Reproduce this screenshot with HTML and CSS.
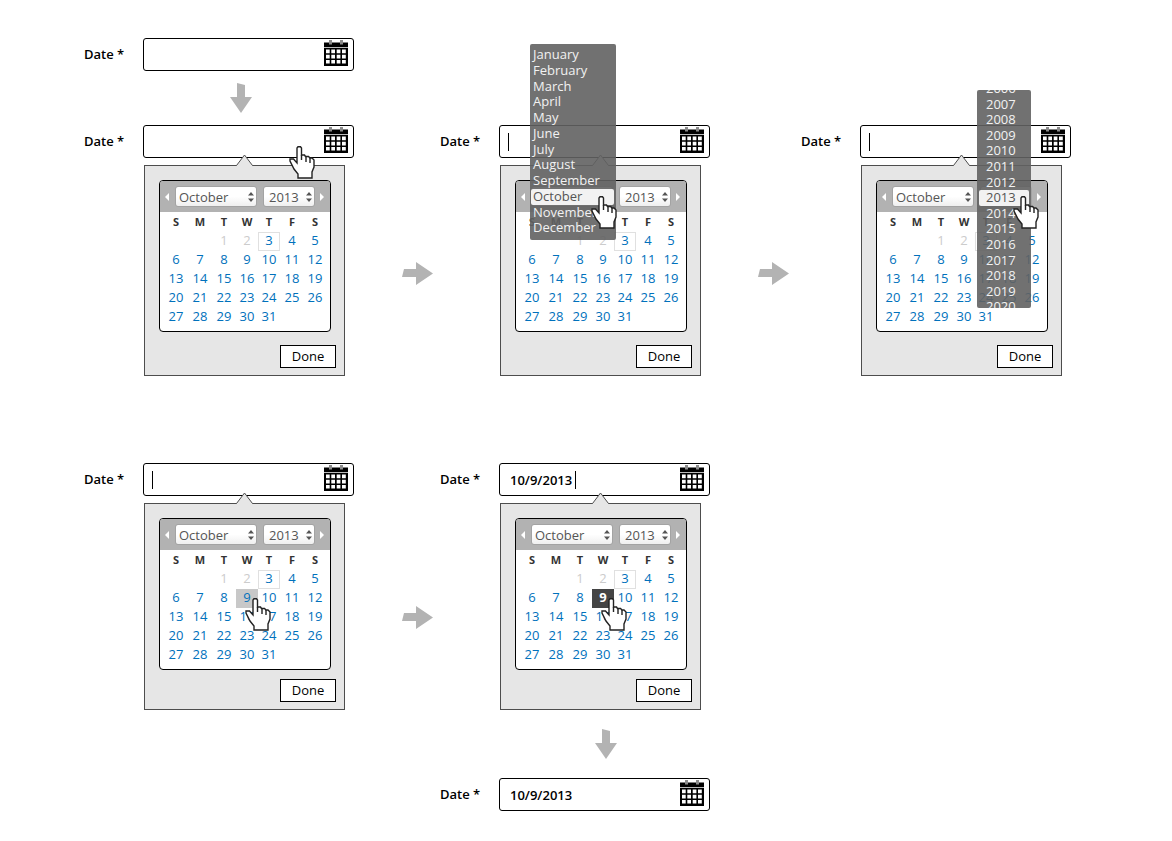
FILE: index.html
```html
<!DOCTYPE html>
<html lang="en">
<head>
<meta charset="utf-8">
<meta name="viewport" content="width=device-width, initial-scale=1">
<title>Date picker flow</title>
<link rel="stylesheet" href="styles.css">
</head>
<body>
<svg class="sprite" aria-hidden="true">
  <symbol id="calendar" viewBox="0 0 24 26">
    <path d="M0 2.500h24V7H0z"/>
    <path d="M5 0h3v4.500H5zM16 0h3v4.500h-3z" fill="#8c8c8c"/>
    <path d="M0 7h24v1H0z" fill="#bbb"/>
    <path d="M0 8h24v18H0z"/>
    <path d="M2 9.500h3.700v3.800H2zM7.300 9.500H11v3.800H7.300zM12.700 9.500h3.700v3.800h-3.700zM18 9.500h3.800v3.800H18zM2 14.800h3.700v3.800H2zM7.300 14.800H11v3.800H7.300zM12.700 14.800h3.700v3.800h-3.700zM18 14.800h3.800v3.800H18zM2 20.100h3.700v3.500H2zM7.300 20.100H11v3.500H7.300zM12.700 20.100h3.700v3.500h-3.700zM18 20.100h3.800v3.500H18z" fill="#fff"/>
  </symbol>
  <symbol id="arrow-right" viewBox="0 0 31 23">
    <path d="M2 7h12V0l17 11.500L14 23v-8H0z" fill="#b3b3b3"/>
  </symbol>
  <symbol id="arrow-down" viewBox="0 0 22 30">
    <path d="M7 0l8 2v12h7L11 30 0 14h7z" fill="#b3b3b3"/>
  </symbol>
  <symbol id="hand" viewBox="0 0 26 33">
    <path d="M8 17V2l1-1.300h2.500l1 1.300v7h3l1 1.500h3l1.500 1.500h2L25 14v7l-2 5v6H9v-4l-4-5-4-8v-2h3.500z" fill="#fff" stroke="#222" stroke-width="1.400"/>
    <path d="M12.500 9v5M17 10.500V16M21 12v5" fill="none" stroke="#222" stroke-width="1.400"/>
  </symbol>
  <symbol id="tip" viewBox="0 0 18 12">
    <path d="M0 12L8.500 1 17 12z" fill="#e6e6e6"/>
    <path d="M0 11.500h.5L8.500 1l8 10.500h.5" fill="none" stroke="#4d4d4d"/>
  </symbol>
  <symbol id="updown" viewBox="0 0 6 10">
    <path d="M3 0l3 3.500H0zM3 10L0 6.500h6z" fill="#555"/>
  </symbol>
  <symbol id="prev" viewBox="0 0 4 8"><path d="M4 0v8L0 4z" fill="#fff"/></symbol>
  <symbol id="next" viewBox="0 0 4 8"><path d="M0 0v8l4-4z" fill="#fff"/></symbol>
</svg>

<main class="flow">
  <section class="step step--start">
    <div class="field">
      <label class="field__label" for="date-1">Date *</label>
      <div class="field__box">
        <input class="field__input" id="date-1" type="text">
        <svg class="field__icon"><use href="#calendar"/></svg>
      </div>
    </div>
  </section>

  <svg class="arrow-down arrow-down--start" aria-hidden="true"><use href="#arrow-down"/></svg>

  <section class="step step--open">
    <div class="field">
      <label class="field__label" for="date-2">Date *</label>
      <div class="field__box">
        <input class="field__input" id="date-2" type="text">
        <svg class="field__icon"><use href="#calendar"/></svg>
      </div>
    </div>
    <div class="picker" data-picker>
      <svg class="hand hand--field"><use href="#hand"/></svg>
    </div>
  </section>

  <svg class="arrow-right arrow-right--one" aria-hidden="true"><use href="#arrow-right"/></svg>

  <section class="step step--month">
    <div class="field">
      <label class="field__label" for="date-3">Date *</label>
      <div class="field__box">
        <input class="field__input" id="date-3" type="text">
        <span class="caret"></span>
        <svg class="field__icon"><use href="#calendar"/></svg>
      </div>
    </div>
    <div class="picker" data-picker>
      <div class="menu menu--month">
        <ul class="menu__list" role="listbox" aria-label="Month">
          <li class="menu__item" role="option">January</li>
          <li class="menu__item" role="option">February</li>
          <li class="menu__item" role="option">March</li>
          <li class="menu__item" role="option">April</li>
          <li class="menu__item" role="option">May</li>
          <li class="menu__item" role="option">June</li>
          <li class="menu__item" role="option">July</li>
          <li class="menu__item" role="option">August</li>
          <li class="menu__item" role="option">September</li>
          <li class="menu__item menu__item--on" role="option" aria-selected="true">October</li>
          <li class="menu__item" role="option">November</li>
          <li class="menu__item" role="option">December</li>
        </ul>
      </div>
      <svg class="hand hand--month"><use href="#hand"/></svg>
    </div>
  </section>

  <svg class="arrow-right arrow-right--two" aria-hidden="true"><use href="#arrow-right"/></svg>

  <section class="step step--year">
    <div class="field">
      <label class="field__label" for="date-4">Date *</label>
      <div class="field__box">
        <input class="field__input" id="date-4" type="text">
        <span class="caret"></span>
        <svg class="field__icon"><use href="#calendar"/></svg>
      </div>
    </div>
    <div class="picker" data-picker>
      <div class="menu menu--year">
        <ul class="menu__list" role="listbox" aria-label="Year">
          <li class="menu__item" role="option">2006</li>
          <li class="menu__item" role="option">2007</li>
          <li class="menu__item" role="option">2008</li>
          <li class="menu__item" role="option">2009</li>
          <li class="menu__item" role="option">2010</li>
          <li class="menu__item" role="option">2011</li>
          <li class="menu__item" role="option">2012</li>
          <li class="menu__item menu__item--on" role="option" aria-selected="true">2013</li>
          <li class="menu__item" role="option">2014</li>
          <li class="menu__item" role="option">2015</li>
          <li class="menu__item" role="option">2016</li>
          <li class="menu__item" role="option">2017</li>
          <li class="menu__item" role="option">2018</li>
          <li class="menu__item" role="option">2019</li>
          <li class="menu__item" role="option">2020</li>
        </ul>
      </div>
      <svg class="hand hand--year"><use href="#hand"/></svg>
    </div>
  </section>

  <section class="step step--hover">
    <div class="field">
      <label class="field__label" for="date-5">Date *</label>
      <div class="field__box">
        <input class="field__input" id="date-5" type="text">
        <span class="caret"></span>
        <svg class="field__icon"><use href="#calendar"/></svg>
      </div>
    </div>
    <div class="picker picker--compact" data-picker data-day="9" data-state="day--hover">
      <svg class="hand hand--day"><use href="#hand"/></svg>
    </div>
  </section>

  <svg class="arrow-right arrow-right--three" aria-hidden="true"><use href="#arrow-right"/></svg>

  <section class="step step--picked">
    <div class="field">
      <label class="field__label" for="date-6">Date *</label>
      <div class="field__box">
        <input class="field__input" id="date-6" type="text" value="10/9/2013">
        <span class="caret caret--end"></span>
        <svg class="field__icon"><use href="#calendar"/></svg>
      </div>
    </div>
    <div class="picker picker--compact" data-picker data-day="9" data-state="day--picked">
      <svg class="hand hand--day"><use href="#hand"/></svg>
    </div>
  </section>

  <svg class="arrow-down arrow-down--end" aria-hidden="true"><use href="#arrow-down"/></svg>

  <section class="step step--done">
    <div class="field">
      <label class="field__label" for="date-7">Date *</label>
      <div class="field__box">
        <input class="field__input" id="date-7" type="text" value="10/9/2013">
        <svg class="field__icon"><use href="#calendar"/></svg>
      </div>
    </div>
  </section>
</main>

<template id="picker-template">
  <svg class="picker__tip" aria-hidden="true"><use href="#tip"/></svg>
  <div class="calendar">
    <div class="calendar__head">
      <button class="nav" type="button" aria-label="Previous month"><svg class="nav__icon"><use href="#prev"/></svg></button>
      <span class="drop drop--month">
        <select class="drop__select" aria-label="Month"><option>October</option></select>
        <svg class="drop__icon"><use href="#updown"/></svg>
      </span>
      <span class="drop drop--year">
        <select class="drop__select" aria-label="Year"><option>2013</option></select>
        <svg class="drop__icon"><use href="#updown"/></svg>
      </span>
      <button class="nav nav--next" type="button" aria-label="Next month"><svg class="nav__icon"><use href="#next"/></svg></button>
    </div>
    <table class="days">
      <colgroup><col class="wide"><col class="wide"><col class="wide"><col class="narrow"><col class="narrow"><col class="wide"><col class="narrow"></colgroup>
      <thead><tr><th>S</th><th>M</th><th>T</th><th>W</th><th>T</th><th>F</th><th>S</th></tr></thead>
      <tbody></tbody>
    </table>
  </div>
  <button class="done" type="button">Done</button>
</template>
<script src="picker.js"></script>
</body>
</html>
```

FILE: picker.js
```js
const TODAY = 3;
const FIRST_WEEKDAY = 2;
const DAYS_IN_MONTH = 31;

function dayButton(day, picker) {
  const button = document.createElement("button");
  button.type = "button";
  button.className = "day";
  button.textContent = day;
  if (day < TODAY) {
    button.classList.add("day--past");
    button.disabled = true;
  }
  if (day === TODAY) button.classList.add("day--today");
  if (day === Number(picker.dataset.day)) button.classList.add(picker.dataset.state);
  return button;
}

function fillDays(body, picker) {
  for (let start = 1 - FIRST_WEEKDAY; start <= DAYS_IN_MONTH; start += 7) {
    const row = body.insertRow();
    for (let day = start; day < start + 7; day++) {
      const cell = row.insertCell();
      if (day > 0 && day <= DAYS_IN_MONTH) cell.append(dayButton(day, picker));
    }
  }
}

const template = document.getElementById("picker-template");
document.querySelectorAll("[data-picker]").forEach((picker) => {
  const content = template.content.cloneNode(true);
  fillDays(content.querySelector("tbody"), picker);
  picker.prepend(content);
});
```

FILE: styles.css
```css
* { box-sizing: border-box; }

body {
  margin: 0;
  background: #fff;
  color: #000;
  font: 13px/18px "Open Sans", "Noto Sans", sans-serif;
}

button, input, select { font: inherit; color: inherit; margin: 0; }
.sprite { position: absolute; width: 0; height: 0; }

.flow {
  display: grid;
  grid-template-columns: 270px minmax(40px, 86fr) 270px minmax(40px, 91fr) 270px;
  grid-template-rows: auto 54px auto 87px auto 68px auto;
  align-items: start;
  padding: 38px 101px 30px 84px;
}

.step--start { grid-area: 1 / 1; }
.arrow-down--start { grid-area: 2 / 1; margin-left: 146px; }
.step--open { grid-area: 3 / 1; }
.arrow-right--one { grid-area: 3 / 2; }
.step--month { grid-area: 3 / 3; }
.arrow-right--two { grid-area: 3 / 4; }
.step--year { grid-area: 3 / 5; }
.step--hover { grid-area: 5 / 1; }
.arrow-right--three { grid-area: 5 / 2; }
.step--picked { grid-area: 5 / 3; }
.arrow-down--end { grid-area: 6 / 3; margin-left: 155px; }
.step--done { grid-area: 7 / 3; }

.arrow-right { width: 31px; height: 23px; margin: 137px 0 0 48px; }
.arrow-right--three { margin-top: 143px; }
.arrow-down { width: 22px; height: 30px; align-self: center; }

.field { display: flex; align-items: center; }
.field__label { width: 59px; padding-bottom: 2px; font-weight: 600; }
.field__box { position: relative; flex: 1; display: flex; }
.field__input {
  width: 100%;
  height: 33px;
  padding: 0 40px 0 10px;
  border: 1px solid #000;
  border-radius: 3px;
  background: #fff;
  font-weight: 600;
}
.field__icon { position: absolute; right: 6px; top: 2px; width: 24px; height: 26px; }
.caret { position: absolute; left: 9px; top: 8px; width: 1px; height: 18px; background: #000; }
.caret--end { left: 76px; }

.picker {
  position: relative;
  width: 201px;
  margin: 7px 0 0 60px;
  padding: 14px 14px 7px;
  border: 1px solid #4d4d4d;
  background: #e6e6e6;
  display: flex;
  flex-direction: column;
}
.picker__tip { position: absolute; left: 91px; top: -12px; width: 18px; height: 12px; }

.calendar {
  width: 172px;
  border: 1px solid #000;
  border-radius: 4px;
  background: #fff;
  overflow: hidden;
  padding-bottom: 4px;
}
.calendar__head { display: flex; align-items: center; height: 31px; background: #b2b2b2; }
.nav {
  flex: 1;
  display: flex;
  padding: 0 0 0 5px;
  border: 0;
  background: none;
}
.nav__icon { width: 4px; height: 8px; }
.drop { position: relative; display: flex; height: 21px; }
.drop--month { width: 82px; margin-right: 6px; }
.drop--year { width: 52px; }
.drop__select {
  appearance: none;
  width: 100%;
  padding: 0 0 0 3px;
  border: 1px solid #a3a3a3;
  border-radius: 3px;
  background: linear-gradient(#fff 50%, #efefef);
  color: #555;
}
.drop--year .drop__select { padding-left: 5px; }
.drop__icon { position: absolute; right: 3px; top: 6px; width: 6px; height: 10px; pointer-events: none; }

.days { width: 162px; margin-left: 4px; table-layout: fixed; border-collapse: collapse; }
.narrow { width: 22px; }
.wide { width: 24px; }
.days th { height: 20px; padding: 0; font-size: 11px; line-height: 20px; font-weight: 700; color: #333; }
.days td { height: 19px; padding: 0; }
.day {
  display: block;
  width: 100%;
  height: 19px;
  padding: 0 0 2px;
  border: 0;
  background: none;
  color: #0071bc;
  line-height: 17px;
  text-align: center;
}
.day--past { color: #ccc; }
.day--today { border: 1px solid #e0e0e0; line-height: 15px; }
.day--hover { background: #c8c8c8; }
.day--picked { background: #444; color: #fff; font-weight: 700; }

.done {
  align-self: flex-end;
  width: 56px;
  height: 23px;
  margin: 13px -6px 0 0;
  padding: 0 0 2px;
  border: 1px solid #000;
  background: #fff;
}
.picker--compact .done { margin-top: 9px; }

.menu { position: absolute; overflow: hidden; border-radius: 2px; background: rgba(98, 98, 98, .9); color: #f2f2f2; }
.menu--month { left: 29px; top: -122px; width: 86px; height: 196px; padding: 3px 2px 4px 1px; }
.menu--year { left: 115px; top: -76px; width: 54px; height: 218px; display: flex; align-items: center; padding: 0 2px 2px; }
.menu__list {
  display: grid;
  grid-template-rows: repeat(12, minmax(0, 1fr));
  width: 100%;
  height: 100%;
  margin: 0;
  padding: 0;
  list-style: none;
}
.menu--year .menu__list { flex: none; height: 234px; grid-template-rows: repeat(15, minmax(0, 1fr)); }
.menu__item { padding-left: 2px; line-height: 15px; }
.menu--year .menu__item { padding-left: 7px; }
.menu__item--on { border-radius: 2px; background: #f2f2f2; color: #555; }

.hand { position: absolute; width: 26px; height: 33px; }
.hand--field { left: 144px; top: -20px; }
.hand--month { left: 90px; top: 30px; }
.hand--year { left: 151px; top: 30px; }
.hand--day { left: 100px; top: 94px; }
```
